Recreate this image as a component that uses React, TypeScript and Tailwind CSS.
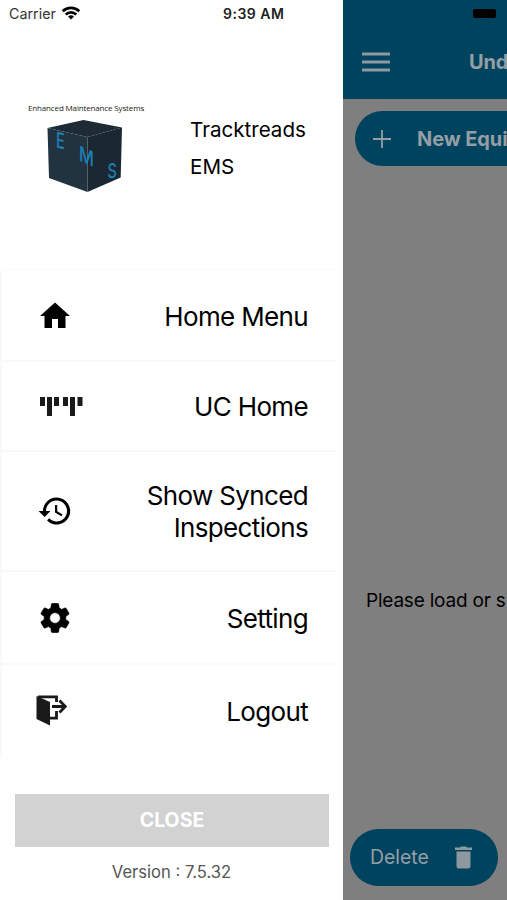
import type { ReactNode } from 'react';

function WifiIcon() {
  return (
    <svg width="20" height="16" viewBox="0 0 20 16" fill="none" stroke="#000" strokeWidth="2.7" className="-mt-0.5">
      <path d="M1.700 6.300a12 12 0 0 1 16.600 0" />
      <path d="M4.700 9.500a7.600 7.600 0 0 1 10.600 0" />
      <path d="M10 14.600 7 11.600a4.300 4.300 0 0 1 6 0z" fill="#000" stroke="none" />
    </svg>
  );
}

function CubeLogo() {
  return (
    <svg width="76" height="74" viewBox="47 119 76 74" className="ml-[47px]">
      <path d="M83.500 120 122 127.500 87.500 137 47.500 128z" fill="#1d2b37" />
      <path d="M47.500 128 87.500 137V192L49 178z" fill="#223340" />
      <path d="M87.500 137 122 127.500 120.700 177.500 87.500 192z" fill="#1b2833" />
      <g fill="#1d80b4" fontFamily="Inter, sans-serif" fontWeight="500">
        <text transform="matrix(.66 .14 0 1 56 147.500)" fontSize="22">E</text>
        <text transform="matrix(.78 .34 0 1 79 160.500)" fontSize="21">M</text>
        <text transform="matrix(.72 -.06 0 1 107.500 178.300)" fontSize="20">S</text>
      </g>
    </svg>
  );
}

function HomeIcon() {
  return (
    <svg width="36" height="36" viewBox="0 0 24 24" className="ml-[37px]">
      <path d="M10 20v-6h4v6h5v-8h3L12 3 2 12h3v8z" />
    </svg>
  );
}

function TracksIcon() {
  return (
    <svg width="44" height="21" viewBox="0 0 44 21" fill="#1a1a1a" className="ml-[39px]">
      <path d="M1 1h5v9H1zM8 1h5v19H8zM15 1h5v9h-5zM24 1h5v9h-5zM31 1h5v19h-5zM38.500 1h5v9h-5z" />
    </svg>
  );
}

function HistoryIcon() {
  return (
    <svg width="36" height="36" viewBox="0 0 24 24" className="ml-[37px]">
      <path d="M13 3a9 9 0 0 0-9 9H1l3.900 3.900.1.100L9 12H6c0-3.900 3.100-7 7-7s7 3.100 7 7-3.100 7-7 7c-1.900 0-3.700-.8-4.900-2.100l-1.400 1.400A9 9 0 1 0 13 3zm-1 5v5l4.300 2.500.7-1.200-3.500-2.100V8z" />
    </svg>
  );
}

function GearIcon() {
  return (
    <svg width="36" height="36" viewBox="0 0 24 24" className="ml-[37px]" stroke="#000" strokeWidth=".5">
      <path d="M19.140 12.940c.040-.3.060-.610.060-.940s-.020-.640-.070-.940l2.030-1.580a.49.49 0 0 0 .120-.610l-1.920-3.320a.488.488 0 0 0-.590-.220l-2.390.960a7.030 7.030 0 0 0-1.620-.940L14.400 2.810a.484.484 0 0 0-.480-.410h-3.840a.47.47 0 0 0-.470.410l-.360 2.540c-.590.240-1.130.570-1.620.940l-2.390-.960a.48.48 0 0 0-.590.220L2.740 8.870a.47.47 0 0 0 .120.610l2.030 1.580c-.050.300-.090.630-.090.940s.020.640.070.940l-2.030 1.580a.49.49 0 0 0-.120.610l1.920 3.320c.120.220.370.290.590.220l2.390-.960c.500.380 1.030.700 1.620.940l.360 2.540c.050.240.240.410.480.410h3.840c.240 0 .440-.170.470-.410l.360-2.540c.590-.240 1.130-.560 1.620-.940l2.390.960c.220.080.470 0 .590-.220l1.920-3.320a.47.47 0 0 0-.120-.610zM12 15.600a3.600 3.600 0 1 1 0-7.200 3.600 3.600 0 0 1 0 7.200z" />
    </svg>
  );
}

function LogoutIcon() {
  return (
    <svg width="32" height="31" viewBox="0 0 32 31" fill="none" stroke="#1a1a1a" strokeWidth="2.800" className="ml-[36px]">
      <path d="M2 1.900H20.500V7M20.500 16V23.200H13" />
      <path d="M.5 1 14 7V30.500L.5 24z" fill="#1a1a1a" stroke="none" />
      <path d="M16 11.500H29M23.500 5.500 29.300 11.500 23.500 17.500" />
    </svg>
  );
}

function MenuRow({ icon, label, height }: { icon: ReactNode; label: ReactNode; height: string }) {
  return (
    <li className={`flex items-center justify-between border-b-2 border-l-2 border-[#f9f9f9] pr-[29px] last:border-b-[#fdfdfd] ${height}`}>
      <span className="-ml-0.5">{icon}</span>
      <span className="pt-0.5 text-right text-[26px] leading-8 tracking-[-0.65px]">{label}</span>
    </li>
  );
}

function Drawer() {
  return (
    <aside className="flex h-full w-[343px] shrink-0 flex-col bg-white">
      <div className="flex h-7 items-center">
        <span className="ml-[9px] w-[52px] text-[14.3px] text-[#333]">Carrier</span>
        <WifiIcon />
        <span className="-mt-px ml-[142px] whitespace-nowrap text-[14px] font-semibold tracking-[0.5px] text-[#222]">9:39 AM</span>
      </div>
      <header className="flex h-[241px]">
        <div className="w-[190px] pt-[74px]">
          <p className="ml-7 whitespace-nowrap font-['Open_Sans',sans-serif] text-[8px] leading-3 tracking-[-0.15px] text-[#222]">
            Enhanced Maintenance Systems
          </p>
          <div className="mt-[5px]"><CubeLogo /></div>
        </div>
        <div className="pt-[83px] text-[20.6px] leading-[37px]">
          <p>Tracktreads</p>
          <p>EMS</p>
        </div>
      </header>
      <ul className="mr-1.5 border-t-2 border-[#fcfcfc]">
        <MenuRow height="h-[91px]" icon={<HomeIcon />} label="Home Menu" />
        <MenuRow height="h-[90px]" icon={<TracksIcon />} label="UC Home" />
        <MenuRow height="h-[120px]" icon={<HistoryIcon />} label={<>Show Synced<br />Inspections</>} />
        <MenuRow height="h-[93px]" icon={<GearIcon />} label="Setting" />
        <MenuRow height="h-[93px]" icon={<LogoutIcon />} label="Logout" />
      </ul>
      <button className="ml-[15px] mt-9 h-[53px] w-[314px] bg-[#d2d2d2] pt-px text-[19.5px] font-bold text-white">CLOSE</button>
      <p className="mt-[13px] text-center text-[16.6px] leading-6 text-[#555]">Version : 7.5.32</p>
    </aside>
  );
}

function Page() {
  return (
    <main className="flex h-full w-[164px] flex-col overflow-hidden whitespace-nowrap bg-[#7f7f7f] text-[#949fa5]">
      <div className="flex h-[99px] shrink-0 flex-col bg-[#00435f]">
        <div className="ml-[130px] mt-[9px] h-[9px] w-[23px] rounded-[2px] bg-black" />
        <div className="mt-[26px] flex h-9 items-center">
          <svg width="28" height="20" viewBox="0 0 28 20" className="ml-[19px] shrink-0" fill="#8e999f">
            <path d="M0 .5h28v3H0zM0 8.500h28v3H0zM0 16.500h28v3H0z" />
          </svg>
          <span className="ml-[79px] text-[20px] font-bold tracking-[-0.2px]">Und</span>
        </div>
      </div>
      <div className="ml-3 mt-3 flex h-[55px] w-[260px] shrink-0 items-center rounded-full bg-[#00435f]">
        <svg width="18" height="18" viewBox="0 0 18 18" className="ml-[18px] shrink-0" stroke="#949fa5" strokeWidth="1.800">
          <path d="M9 0V18M0 9H18" />
        </svg>
        <span className="ml-[26px] text-[20px] font-bold tracking-[-0.1px]">New Equi</span>
      </div>
      <p className="ml-[23px] mt-[423px] text-[19px] leading-6 tracking-[-0.2px] text-black">Please load or s</p>
      <div className="ml-[7px] mt-[216px] flex h-[57px] w-[148px] shrink-0 items-center rounded-full bg-[#00435f]">
        <span className="ml-5 w-[85px] pt-px text-[19.4px]">Delete</span>
        <svg width="17" height="23" viewBox="0 0 17 23" fill="#8e999f">
          <path d="M0 1.500h5L6 .5h5l1 1h5V4H0zM1.500 5.500h14V20a2.500 2.500 0 0 1-2.500 2.500H4A2.500 2.500 0 0 1 1.500 20z" />
        </svg>
      </div>
    </main>
  );
}

export default function App() {
  return (
    <div className="flex h-[900px] w-[507px] overflow-hidden bg-white font-[Inter,sans-serif] text-black">
      <Drawer />
      <Page />
    </div>
  );
}
